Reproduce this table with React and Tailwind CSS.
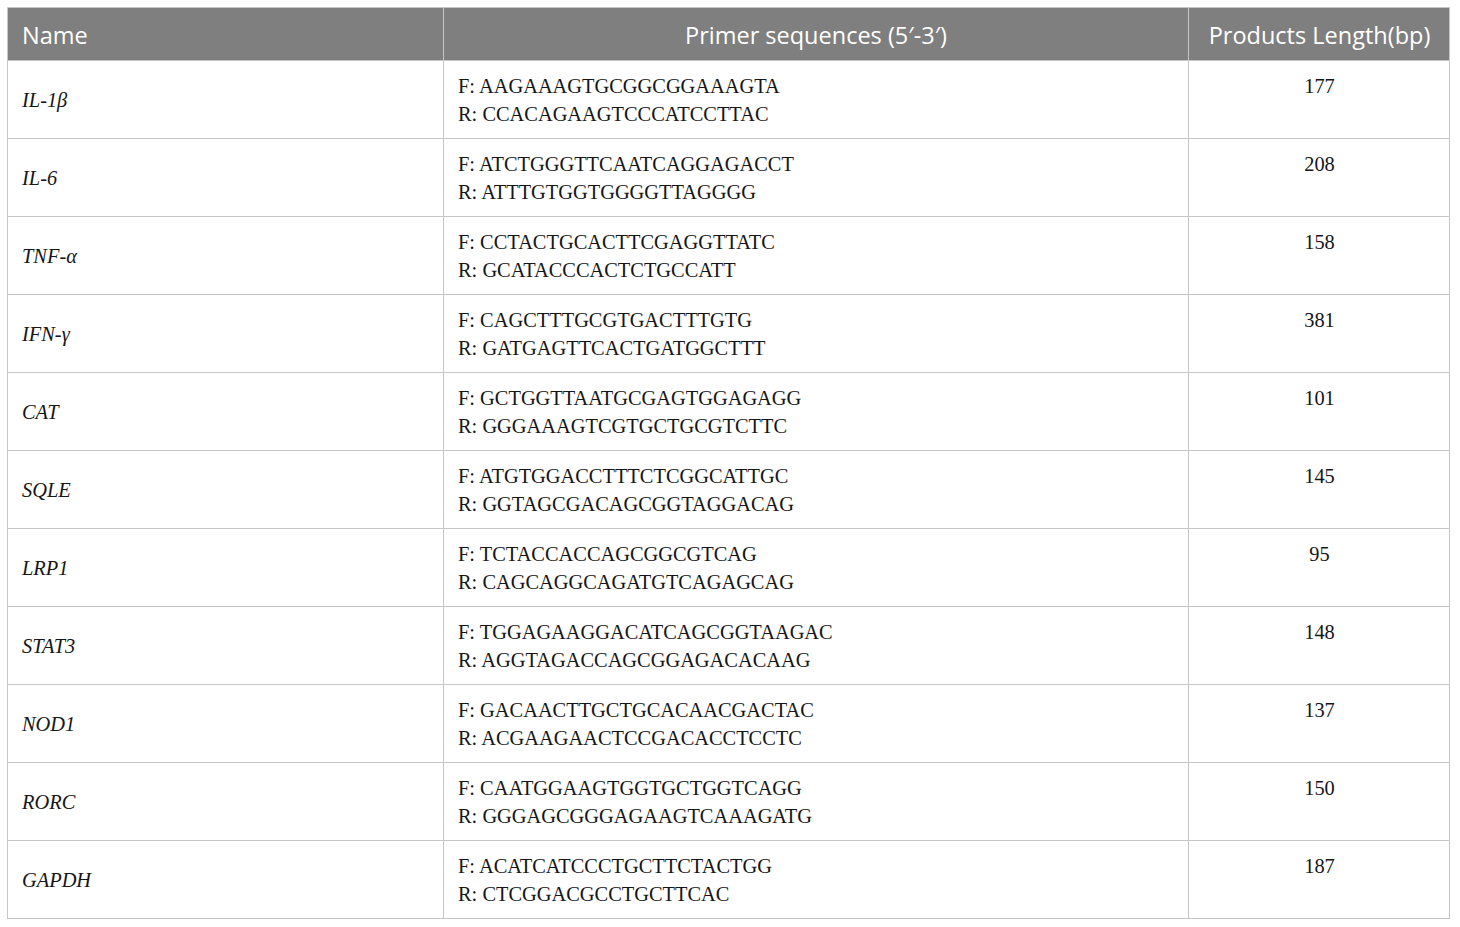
import React from 'react';

const rows = [
  { name: 'IL-1β', f: 'AAGAAAGTGCGGCGGAAAGTA', r: 'CCACAGAAGTCCCATCCTTAC', len: '177' },
  { name: 'IL-6', f: 'ATCTGGGTTCAATCAGGAGACCT', r: 'ATTTGTGGTGGGGTTAGGGG', len: '208' },
  { name: 'TNF-α', f: 'CCTACTGCACTTCGAGGTTATC', r: 'GCATACCCACTCTGCCATT', len: '158' },
  { name: 'IFN-γ', f: 'CAGCTTTGCGTGACTTTGTG', r: 'GATGAGTTCACTGATGGCTTT', len: '381' },
  { name: 'CAT', f: 'GCTGGTTAATGCGAGTGGAGAGG', r: 'GGGAAAGTCGTGCTGCGTCTTC', len: '101' },
  { name: 'SQLE', f: 'ATGTGGACCTTTCTCGGCATTGC', r: 'GGTAGCGACAGCGGTAGGACAG', len: '145' },
  { name: 'LRP1', f: 'TCTACCACCAGCGGCGTCAG', r: 'CAGCAGGCAGATGTCAGAGCAG', len: '95' },
  { name: 'STAT3', f: 'TGGAGAAGGACATCAGCGGTAAGAC', r: 'AGGTAGACCAGCGGAGACACAAG', len: '148' },
  { name: 'NOD1', f: 'GACAACTTGCTGCACAACGACTAC', r: 'ACGAAGAACTCCGACACCTCCTC', len: '137' },
  { name: 'RORC', f: 'CAATGGAAGTGGTGCTGGTCAGG', r: 'GGGAGCGGGAGAAGTCAAAGATG', len: '150' },
  { name: 'GAPDH', f: 'ACATCATCCCTGCTTCTACTGG', r: 'CTCGGACGCCTGCTTCAC', len: '187' },
];

const cols = 'grid grid-cols-[436px_745px_261px]';

export default function App() {
  return (
    <div className="w-[1460px] h-[927px] bg-white pt-[7px] pl-[7px]">
      <div className="w-[1443px] border border-[#c6c6c6]">
        {/* header */}
        <div className={`${cols} h-[52px] bg-[#7f7f7f] text-white font-['Open_Sans',sans-serif] text-[23.5px]`}>
          <div className="flex items-center pl-[14px] pt-[3px] border-r border-[#c6c6c6]">Name</div>
          <div className="flex items-center justify-center pt-[3px] border-r border-[#c6c6c6]">Primer sequences (5′-3′)</div>
          <div className="flex items-center justify-center pt-[3px]">Products Length(bp)</div>
        </div>

        {rows.map((row) => (
          <div
            key={row.name}
            className={`${cols} h-[78px] border-t border-[#c6c6c6] text-[#161616] font-['Liberation_Serif',serif] text-[20.4px] leading-[28px]`}
          >
            <div className="flex items-center pl-[14px] italic border-r border-[#c6c6c6]">{row.name}</div>
            <div className="pt-[11px] pl-[14px] border-r border-[#c6c6c6]">
              <div>F: {row.f}</div>
              <div>R: {row.r}</div>
            </div>
            <div className="pt-[11px] text-center">{row.len}</div>
          </div>
        ))}
      </div>
    </div>
  );
}
